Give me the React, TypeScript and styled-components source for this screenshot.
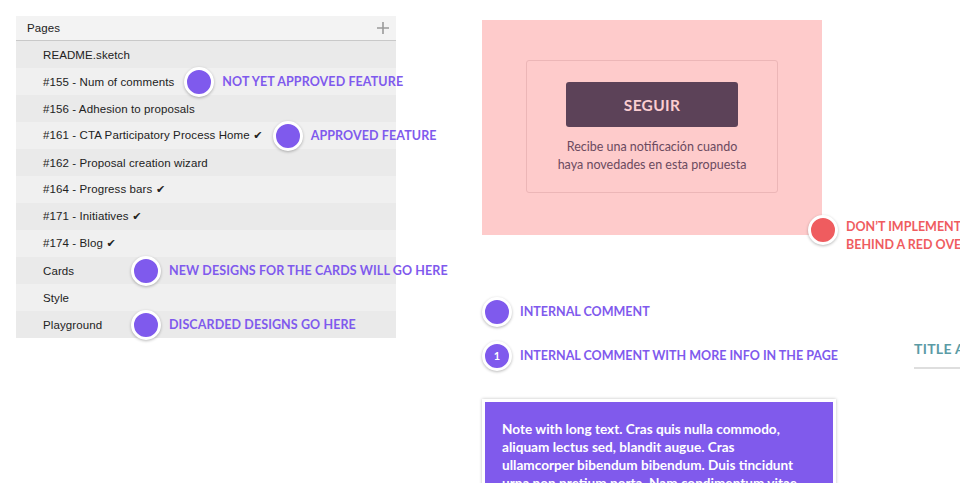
import React from "react";
import styled, { createGlobalStyle } from "styled-components";

const Global = createGlobalStyle`
  html, body { margin: 0; padding: 0; background: #fff; }
  body { overflow: hidden; }
  * { box-sizing: border-box; }
`;

const LABEL_FONT = `"Lato", "Open Sans", "Noto Sans", sans-serif`;
const PURPLE = "#7f5aed";
const RED = "#ef5c5f";

const Canvas = styled.div`
  position: relative;
  width: 960px;
  height: 483px;
  overflow: hidden;
  display: flex;
  align-items: flex-start;
  padding: 16px 0 0 16px;
  background: #fff;
`;

const Panel = styled.div`
  width: 380px;
  flex: none;
  font-family: "Liberation Sans", Arial, "DejaVu Sans", sans-serif;
  font-size: 11.5px;
  letter-spacing: 0.1px;
  color: #222;
`;

const PanelHeader = styled.div`
  height: 25px;
  display: flex;
  align-items: center;
  justify-content: space-between;
  padding: 0 7px 0 11px;
  background: #f3f3f3;
  border-bottom: 1px solid #c9c9c9;
`;

const Row = styled.div<{ $odd: boolean }>`
  height: 27px;
  display: flex;
  align-items: center;
  padding-left: 27px;
  background: ${(p) => (p.$odd ? "#f0f0f0" : "#eaeaea")};
`;

const Name = styled.span<{ $min?: number }>`
  flex: none;
  min-width: ${(p) => (p.$min ? `${p.$min}px` : "0")};
  white-space: nowrap;
`;

const Check = styled.span`
  font-family: "DejaVu Sans", sans-serif;
  font-size: 11px;
`;

const Note = styled.div<{ $color: string }>`
  position: relative;
  z-index: 1;
  flex: none;
  display: flex;
  align-items: center;
  gap: 8px;
  margin-left: 10px;
  white-space: nowrap;
  font-family: ${LABEL_FONT};
  font-weight: 700;
  font-size: 12.5px;
  line-height: 18px;
  color: ${(p) => p.$color};
`;

const Dot = styled.span<{ $color: string }>`
  flex: none;
  width: 30px;
  height: 30px;
  border-radius: 50%;
  background: ${(p) => p.$color};
  border: 3px solid #fff;
  box-shadow: 0 1px 3px rgba(0, 0, 0, 0.28);
  display: flex;
  align-items: center;
  justify-content: center;
  color: #fff;
  font-size: 11px;
  font-weight: 700;
  margin: -2px 0;
`;

const Right = styled.div`
  margin-left: 86px;
  width: 354px;
  flex: none;
  display: flex;
  flex-direction: column;
  padding-top: 4px;
`;

const Overlay = styled.div`
  position: relative;
  width: 340px;
  height: 215px;
  background: #fecbcb;
  padding: 40px 0 0 44px;
`;

const Card = styled.div`
  width: 252px;
  height: 133px;
  border: 1px solid #ecb6b7;
  border-radius: 3px;
  display: flex;
  flex-direction: column;
  align-items: center;
  padding-top: 21px;
  font-family: ${LABEL_FONT};
`;

const FollowButton = styled.div`
  width: 172px;
  height: 45px;
  border-radius: 3px;
  background: #5c4258;
  color: #fbcdd0;
  font-weight: 700;
  font-size: 15.5px;
  display: flex;
  align-items: center;
  justify-content: center;
  letter-spacing: 0.3px;
`;

const Hint = styled.p`
  margin: 11px 0 0;
  text-align: center;
  font-size: 12.5px;
  line-height: 17.5px;
  color: #6b4a5f;
`;

const CornerNote = styled(Note)`
  position: absolute;
  left: 326px;
  top: 195px;
  margin-left: 0;
  align-items: flex-start;
  & > ${Dot} { margin: 0; }
`;

const CornerText = styled.span`
  padding-top: 3px;
`;

const Comments = styled.div`
  margin-top: 64px;
  display: flex;
  flex-direction: column;
  gap: 18px;
  & > ${Note} { margin-left: 0; }
`;

const Sticky = styled.div`
  margin-top: 30px;
  border: 3px solid #fff;
  box-shadow: 0 0 3px rgba(0, 0, 0, 0.25);
  background: #805aec;
  padding: 18px 17px 20px;
  color: #fff;
  font-family: ${LABEL_FONT};
  font-weight: 700;
  font-size: 13.6px;
  line-height: 18px;
  height: 120px;
  white-space: nowrap;
`;

const Far = styled.div`
  margin-left: 78px;
  margin-top: 324px;
  width: 200px;
  flex: none;
`;

const Title = styled.div`
  font-family: ${LABEL_FONT};
  font-weight: 700;
  font-size: 14px;
  color: #5b9ba5;
  letter-spacing: 0.3px;
  padding-bottom: 10px;
  border-bottom: 2px solid #dedede;
  white-space: nowrap;
`;

const Plus = () => (
  <svg width="12" height="12" viewBox="0 0 12 12">
    <path d="M6 0v12M0 6h12" stroke="#9a9a9a" strokeWidth="1.6" />
  </svg>
);

type Page = { name: string; check?: boolean; note?: string; min?: number };

const pages: Page[] = [
  { name: "README.sketch" },
  { name: "#155 - Num of comments", note: "NOT YET APPROVED FEATURE" },
  { name: "#156 - Adhesion to proposals" },
  { name: "#161 - CTA Participatory Process Home", check: true, note: "APPROVED FEATURE" },
  { name: "#162 - Proposal creation wizard" },
  { name: "#164 - Progress bars", check: true },
  { name: "#171 - Initiatives", check: true },
  { name: "#174 - Blog", check: true },
  { name: "Cards", note: "NEW DESIGNS FOR THE CARDS WILL GO HERE", min: 78 },
  { name: "Style" },
  { name: "Playground", note: "DISCARDED DESIGNS GO HERE", min: 78 },
];

const noteLines = [
  "Note with long text. Cras quis nulla commodo,",
  "aliquam lectus sed, blandit augue. Cras",
  "ullamcorper bibendum bibendum. Duis tincidunt",
  "urna non pretium porta. Nam condimentum vitae",
  "ligula vel finibus.",
];

export default function App() {
  return (
    <>
      <Global />
      <Canvas>
        <Panel>
          <PanelHeader>
            <span>Pages</span>
            <Plus />
          </PanelHeader>
          {pages.map((p, i) => (
            <Row key={p.name} $odd={i % 2 === 1}>
              <Name $min={p.min}>
                {p.name}
                {p.check && <Check> ✔</Check>}
              </Name>
              {p.note && (
                <Note $color={PURPLE}>
                  <Dot $color={PURPLE} />
                  {p.note}
                </Note>
              )}
            </Row>
          ))}
        </Panel>
        <Right>
          <Overlay>
            <Card>
              <FollowButton>SEGUIR</FollowButton>
              <Hint>
                Recibe una notificación cuando
                <br />
                haya novedades en esta propuesta
              </Hint>
            </Card>
            <CornerNote $color={RED}>
              <Dot $color={RED} />
              <CornerText>
                DON’T IMPLEMENT THINGS
                <br />
                BEHIND A RED OVERLAY
              </CornerText>
            </CornerNote>
          </Overlay>
          <Comments>
            <Note $color={PURPLE}>
              <Dot $color={PURPLE} />
              INTERNAL COMMENT
            </Note>
            <Note $color={PURPLE}>
              <Dot $color={PURPLE}>1</Dot>
              INTERNAL COMMENT WITH MORE INFO IN THE PAGE
            </Note>
          </Comments>
          <Sticky>
            {noteLines.map((l, i) => (
              <React.Fragment key={i}>
                {l}
                {i < noteLines.length - 1 && <br />}
              </React.Fragment>
            ))}
          </Sticky>
        </Right>
        <Far>
          <Title>TITLE AND DESCRIPTION</Title>
        </Far>
      </Canvas>
    </>
  );
}
